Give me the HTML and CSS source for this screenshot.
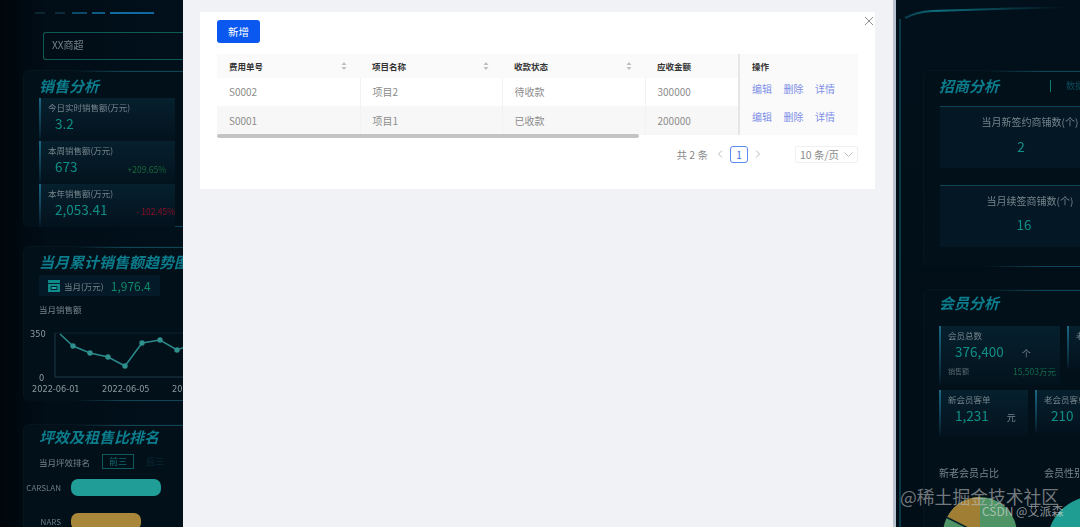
FILE: index.html
```html
<!DOCTYPE html>
<html>
    <head>
        <title>费用管理</title>
        <meta charset="UTF-8">
        <meta name="viewport" content="width=device-width, initial-scale=1.0">
        <link rel="stylesheet" href="styles.css">
    </head>
    <body>
        <div class="screen">
            <div class="left">
                <div class="dashes"><i class="d1"></i><i class="d2"></i><i class="d3"></i><i class="d4"></i><i class="d5"></i></div>
                <div class="mall">XX商超</div>
                <div class="panel sales">
                    <h2>销售分析</h2>
                    <div class="kpi">
                        <p class="lbl">今日实时销售额(万元)</p>
                        <p class="val">3.2</p>
                    </div>
                    <div class="kpi">
                        <p class="lbl">本周销售额(万元)</p>
                        <p class="val">673</p>
                        <span class="up">+209.65%</span>
                    </div>
                    <div class="kpi">
                        <p class="lbl">本年销售额(万元)</p>
                        <p class="val">2,053.41</p>
                        <span class="down">- 102.45%</span>
                    </div>
                </div>
                <div class="panel trend">
                    <h2 class="nowrap">当月累计销售额趋势图</h2>
                    <div class="month">
                        <svg width="12" height="12" viewBox="0 0 12 12"><path d="M0 0h12v12H0z" fill="#0f8a8a"/><path d="M0 3.5h12M3 6.5h6v3H3z" stroke="#05202c" fill="#1fa6a0"/></svg>
                        <span class="lbl">当月(万元)</span>
                        <span class="monthval">1,976.4</span>
                    </div>
                    <p class="lbl sub">当月销售额</p>
                    <svg class="chart" width="160" height="66" viewBox="0 0 160 66">
                        <path d="M25 2H160" stroke="#0a2230" fill="none"/>
                        <path d="M25 46H160M25 2V46" stroke="#1c3844" fill="none"/>
                        <polyline points="30,3 43,15 60,22 78,26 95,35 112,12 130,9 147,19 160,14" fill="none" stroke="#2b8a8a" stroke-width="1.5"/>
                        <g fill="#2f8f8c">
                            <circle cx="43" cy="15" r="2.7"/><circle cx="60" cy="22" r="2.7"/><circle cx="78" cy="26" r="2.7"/><circle cx="95" cy="35" r="2.7"/><circle cx="112" cy="12" r="2.7"/><circle cx="130" cy="9" r="2.7"/><circle cx="147" cy="19" r="2.7"/>
                        </g>
                        <g class="axis">
                            <text x="0" y="6">350</text>
                            <text x="9" y="50">0</text>
                            <text x="2" y="61">2022-06-01</text>
                            <text x="72" y="61">2022-06-05</text>
                            <text x="142" y="61">2022-06-09</text>
                        </g>
                    </svg>
                </div>
                <div class="panel rank">
                    <h2 class="nowrap">坪效及租售比排名</h2>
                    <div class="rankhead">
                        <span class="lbl">当月坪效排名</span>
                        <span class="top3">前三</span>
                        <span class="after3">后三</span>
                    </div>
                    <div class="barrow"><span class="barname">CARSLAN</span><i class="bar teal"></i></div>
                    <div class="barrow"><span class="barname">NARS</span><i class="bar gold"></i></div>
                </div>
            </div>

            <div class="drawer">
                <div class="card">
                    <svg class="close" width="10" height="10" viewBox="0 0 10 10"><path d="M1 1l8 8M9 1l-8 8" stroke="#8c8c8c" fill="none"/></svg>
                    <button class="add">新增</button>
                    <table class="tbl">
                        <thead>
                            <tr>
                                <th class="c1">费用单号<svg class="sort" width="6" height="10" viewBox="0 0 6 10"><path d="M3 1l2.5 3h-5zM3 9L.5 6h5z" fill="#bfbfbf"/></svg></th>
                                <th class="c2">项目名称<svg class="sort" width="6" height="10" viewBox="0 0 6 10"><path d="M3 1l2.5 3h-5zM3 9L.5 6h5z" fill="#bfbfbf"/></svg></th>
                                <th class="c3">收款状态<svg class="sort" width="6" height="10" viewBox="0 0 6 10"><path d="M3 1l2.5 3h-5zM3 9L.5 6h5z" fill="#bfbfbf"/></svg></th>
                                <th class="c4">应收金额</th>
                                <th class="c5 op">操作</th>
                            </tr>
                        </thead>
                        <tbody>
                            <tr class="r1">
                                <td>S0002</td>
                                <td>项目2</td>
                                <td>待收款</td>
                                <td>300000</td>
                                <td class="op links"><a>编辑</a><a>删除</a><a>详情</a></td>
                            </tr>
                            <tr class="r2">
                                <td>S0001</td>
                                <td>项目1</td>
                                <td>已收款</td>
                                <td>200000</td>
                                <td class="op links"><a>编辑</a><a>删除</a><a>详情</a></td>
                            </tr>
                        </tbody>
                    </table>
                    <div class="scroll"></div>
                    <div class="pager">
                        <span class="total">共 2 条</span>
                        <svg width="6" height="8" viewBox="0 0 6 8"><path d="M5 .5L1.5 4 5 7.5" stroke="#bbb" fill="none"/></svg>
                        <span class="page">1</span>
                        <svg width="6" height="8" viewBox="0 0 6 8"><path d="M1 .5L4.5 4 1 7.5" stroke="#bbb" fill="none"/></svg>
                        <span class="size">10 条/页<svg width="9" height="5" viewBox="0 0 9 5"><path d="M.5.5l4 4 4-4" stroke="#bbb" fill="none"/></svg></span>
                    </div>
                </div>
            </div>

            <div class="right">
                <svg class="glow" width="184" height="12" viewBox="0 0 184 12">
                    <defs>
                        <linearGradient id="glowline">
                            <stop offset="0" stop-color="#0a3a4a"/>
                            <stop offset=".2" stop-color="#0e7080"/>
                            <stop offset=".7" stop-color="#07303c"/>
                            <stop offset="1" stop-color="#01101a"/>
                        </linearGradient>
                    </defs>
                    <path d="M9 11Q20 5 36 4L170 0" stroke="url(#glowline)" stroke-width="2" fill="none"/>
                </svg>
                <div class="rightin">
                    <div class="panel shops">
                        <div class="shopshead"><h2>招商分析</h2><span class="tag">数据</span></div>
                        <div class="shop">
                            <p class="lbl">当月新签约商铺数(个)</p>
                            <p class="val">2</p>
                        </div>
                        <div class="shop">
                            <p class="lbl">当月续签商铺数(个)</p>
                            <p class="val">16</p>
                        </div>
                    </div>
                    <div class="panel members">
                        <h2>会员分析</h2>
                        <div class="mrow">
                            <div class="kpi mtotal">
                                <p class="lbl">会员总数</p>
                                <p class="val">376,400<span class="unit">个</span></p>
                                <p class="mfoot"><span>销售额</span><b>15,503万元</b></p>
                            </div>
                            <div class="kpi">
                                <p class="lbl">老会员数</p>
                            </div>
                        </div>
                        <div class="mrow">
                            <div class="kpi mnew">
                                <p class="lbl">新会员客单</p>
                                <p class="val">1,231<span class="unit">元</span></p>
                            </div>
                            <div class="kpi">
                                <p class="lbl">老会员客单</p>
                                <p class="val">210</p>
                            </div>
                        </div>
                        <div class="pies">
                            <div class="piebox">
                                <p class="lbl pietitle">新老会员占比</p>
                                <svg class="pie1" width="76" height="40" viewBox="0 0 76 40">
                                    <circle cx="37" cy="37" r="37" fill="#4f9465"/>
                                    <path d="M37 37V0A37 37 0 0 0 4 20.5z" fill="#a07f35"/>
                                    <path d="M37 37L4 20.5" stroke="#06202a" stroke-width="1.5"/>
                                </svg>
                            </div>
                            <div class="piebox">
                                <p class="lbl pietitle">会员性别</p>
                                <svg class="pie2" width="30" height="40" viewBox="0 0 30 40">
                                    <circle cx="45" cy="47" r="48" fill="#1f9d93"/>
                                </svg>
                            </div>
                        </div>
                    </div>
                </div>
            </div>
        </div>
        <div class="mark">
            <span class="mark1">@稀土掘金技术社区</span>
            <span class="mark2">CSDN @艾派森</span>
        </div>
    </body>
</html>
```

FILE: styles.css
```css
*{
    box-sizing: border-box;
    margin: 0;
    padding: 0;
}
body{
    width: 1080px;
    height: 527px;
    overflow: hidden;
    position: relative;
    background-color: #010a13;
    font-family: "Noto Sans CJK SC", "Noto Sans", sans-serif;
}
.screen{
    display: flex;
    height: 527px;
    overflow: hidden;
}
p{
    white-space: nowrap;
}

/* dark dashboard behind the drawer */
.left{
    width: 183px;
    flex: none;
    height: 527px;
    overflow: hidden;
    padding: 11px 0 0 23px;
    background: linear-gradient(90deg, #00060b 0, #010d17 25%, #01101b 100%);
    filter: blur(.4px);
}
.dashes{
    display: flex;
    height: 3px;
    margin-left: 12px;
    align-items: center;
}
.dashes i{
    display: block;
    height: 2px;
}
.d1{ width: 10px; background-color: #0a2530; }
.d2{ width: 10px; margin-left: 10px; background-color: #0c2c3c; }
.d3{ width: 15px; margin-left: 7px; background-color: #0c4a6c; }
.d4{ width: 13px; margin-left: 5px; background-color: #0e5a85; }
.d5{ width: 44px; margin-left: 5px; background-color: #0f6aa0; }
.mall{
    width: 160px;
    height: 28px;
    margin: 18px 0 10px 20px;
    padding-left: 8px;
    border: 1px solid #0d5a55;
    border-right: 0;
    border-radius: 3px 0 0 3px;
    color: #77838a;
    font-size: 10px;
    line-height: 23px;
}
.panel{
    border-left: 1px solid #05161f;
    border-top: 1px solid #05161f;
    border-radius: 6px 0 0 6px;
    background:
        linear-gradient(90deg, transparent 30%, #0e4658 60%) top / 100% 1px no-repeat,
        linear-gradient(90deg, transparent 30%, #0e4658 60%) bottom / 100% 1px no-repeat,
        #02101a;
}
.panel h2{
    color: #0b7d8c;
    font-size: 15px;
    font-style: italic;
    font-weight: 700;
    line-height: 18px;
}
.nowrap{
    white-space: nowrap;
}
.lbl{
    color: #76858b;
    font-size: 8.5px;
    line-height: 12px;
}
.val{
    color: #0f8f86;
    font-size: 13.5px;
    line-height: 20px;
    padding-left: 7px;
}
.kpi{
    position: relative;
    height: 43px;
    padding: 3px 0 0 7px;
    border-left: 2px solid;
    border-image: linear-gradient(180deg, #1a6a88, #0a2a3a 80%, transparent) 1;
    background: linear-gradient(180deg, #06202e, #03121d);
}
.sales{
    width: 170px;
    height: 157px;
    padding: 6px 0 0 15px;
}
.sales h2{
    margin-bottom: 3px;
}
.sales .kpi{
    width: 136px;
}
.up{
    position: absolute;
    right: 9px;
    bottom: 9px;
    color: #176a3c;
    font-size: 8.5px;
    line-height: 12px;
}
.down{
    position: absolute;
    right: 0;
    bottom: 10px;
    color: #8a0f26;
    font-size: 8.5px;
    line-height: 12px;
    white-space: nowrap;
}
.trend{
    width: 170px;
    height: 155px;
    margin-top: 19px;
    padding: 6px 0 0 15px;
    overflow: hidden;
}
.month{
    display: flex;
    align-items: center;
    gap: 4px;
    width: 121px;
    height: 21px;
    margin-top: 4px;
    padding-left: 9px;
    background-color: #041a28;
}
.monthval{
    margin-left: 3px;
    color: #0f8a68;
    font-size: 12px;
}
.sub{
    margin-top: 7px;
}
.chart{
    display: block;
    margin: 16px 0 0 -9px;
    overflow: visible;
}
.axis text{
    fill: #8d9ba0;
    font-family: "DejaVu Sans", sans-serif;
    font-size: 8.2px;
}
.rank{
    width: 170px;
    height: 120px;
    margin-top: 23px;
    padding: 3px 0 0 15px;
    overflow: hidden;
}
.rankhead{
    display: flex;
    align-items: center;
    gap: 12px;
    margin-top: 8px;
    white-space: nowrap;
}
.top3{
    width: 32px;
    height: 15px;
    border: 1px solid #0e5a5c;
    color: #0d6a70;
    font-size: 9px;
    line-height: 13px;
    text-align: center;
}
.after3{
    color: #0a2a36;
    font-size: 9px;
}
.barrow{
    display: flex;
    align-items: center;
    gap: 10px;
    height: 17px;
    margin: 10px 0 17px -15px;
}
.barname{
    width: 37px;
    flex: none;
    color: #6d7b80;
    font-size: 8px;
    text-align: right;
    white-space: nowrap;
}
.bar{
    display: block;
    height: 17px;
    border-radius: 7px;
}
.teal{
    width: 90px;
    background-color: #1f9d96;
}
.gold{
    width: 70px;
    background-color: #a8873a;
}

/* drawer */
.drawer{
    width: 713px;
    flex: none;
    height: 527px;
    padding: 12px 0 0 17px;
    background-color: #f0f2f5;
    border-right: 3px solid #b9c3cf;
}
.card{
    position: relative;
    width: 675px;
    height: 177px;
    padding: 8px 17px 0;
    background-color: #fff;
}
.close{
    position: absolute;
    top: 4px;
    right: 1px;
}
.add{
    display: block;
    width: 43px;
    height: 23px;
    border: 0;
    border-radius: 3px;
    background-color: #0a58f0;
    color: #fff;
    font-family: inherit;
    font-size: 10.5px;
}
.tbl{
    width: 641px;
    margin-top: 11px;
    border-collapse: collapse;
    table-layout: fixed;
    font-size: 10px;
}
.c1{ width: 143px; }
.c2{ width: 142px; }
.c3{ width: 143px; }
.c4{ width: 94px; }
.c5{ width: 119px; }
th{
    position: relative;
    height: 24px;
    padding-left: 12px;
    padding-bottom: 1px;
    background-color: #fafafa;
    color: #333;
    font-size: 8.5px;
    font-weight: 700;
    text-align: left;
}
td{
    padding-left: 12px;
    padding-bottom: 1px;
    color: #8c8c8c;
    border-right: 1px solid #f2f2f2;
}
.r1 td{
    height: 28px;
    background-color: #fff;
}
.r2 td{
    height: 29px;
    background-color: #f7f7f7;
}
.sort{
    position: absolute;
    top: 7px;
    right: 13px;
}
.op{
    border-left: 2px solid #e6e6e6;
}
.r1 .links, .r2 .links{
    padding-bottom: 8px;
    border-right: 0;
    background-color: #fafafa;
}
.links a{
    margin-right: 11.5px;
    color: #7f90e8;
}
.scroll{
    width: 422px;
    height: 4px;
    margin-top: -1px;
    border-radius: 2px;
    background-color: #c4c4c4;
    position: relative;
}
.pager{
    display: flex;
    align-items: center;
    justify-content: flex-end;
    height: 18px;
    margin-top: 7px;
    gap: 7px;
    color: #8a8a8a;
    font-size: 10.5px;
}
.total{
    margin-right: 2px;
}
.page{
    width: 18px;
    height: 17px;
    border: 1px solid #5b8def;
    border-radius: 3px;
    color: #3d74e0;
    font-size: 10px;
    line-height: 15px;
    text-align: center;
}
.size{
    display: flex;
    align-items: center;
    gap: 5px;
    width: 63px;
    height: 17px;
    margin-left: 27px;
    padding-left: 4px;
    border: 1px solid #f0f0f0;
    border-radius: 2px;
}

/* right side */
.right{
    flex: 1;
    height: 527px;
    overflow: hidden;
    padding-top: 7px;
    background: linear-gradient(180deg, #01101a, #010d17);
    filter: blur(.4px);
}
.glow{
    display: block;
}
.rightin{
    height: 508px;
    margin-left: 3px;
    padding: 51px 0 0 22px;
    border-left: 2px solid #0a3a48;
}
.shops{
    height: 197px;
    width: 200px;
    padding: 6px 0 0 15px;
}
.shopshead{
    display: flex;
    align-items: center;
    gap: 51px;
    white-space: nowrap;
}
.tag{
    color: #0d4a58;
    font-size: 9px;
    line-height: 12px;
    padding-left: 15px;
    border-left: 1px solid #0f7d70;
}
.shop{
    width: 180px;
    height: 62px;
    margin: 11px 0 0 1px;
    padding-top: 7px;
    border-top: 1px solid #0d4552;
    background-color: #031725;
    text-align: center;
}
.shop + .shop{
    margin-top: 17px;
}
.shop .lbl{
    font-size: 10px;
    line-height: 16px;
}
.shop .val{
    margin-top: 6px;
    padding: 0 18px 0 0;
    font-size: 13.5px;
}
.shop + .shop .val{
    margin-top: 5px;
    padding-right: 12px;
}
.members{
    width: 200px;
    height: 250px;
    margin-top: 22px;
    padding: 4px 0 0 15px;
}
.mrow{
    display: flex;
    gap: 7px;
    white-space: nowrap;
}
.members h2{
    margin-bottom: 14px;
}
.mtotal{
    width: 121px;
    height: 59px;
    flex: none;
}
.mnew{
    width: 89px;
    height: 46px;
    flex: none;
}
.mrow + .mrow{
    margin-top: 5px;
}
.mrow .kpi{
    min-width: 60px;
}
.unit{
    margin-left: 18px;
    color: #76858b;
    font-size: 9px;
}
.mfoot{
    display: flex;
    align-items: center;
    justify-content: space-between;
    padding-right: 4px;
    color: #5c6a70;
    font-size: 7px;
    line-height: 14px;
}
.mfoot b{
    color: #116a4a;
    font-size: 8.5px;
    font-weight: 400;
}
.pies{
    display: flex;
    margin-top: 30px;
}
.piebox{
    width: 105px;
    flex: none;
}
.pietitle{
    font-size: 10px;
    line-height: 14px;
    margin-bottom: 17px;
}
.pie1{
    display: block;
    margin-left: 4px;
}
.pie2{
    display: block;
    margin-left: 6px;
}
.mark{
    position: absolute;
    left: 900px;
    top: 485px;
    width: 180px;
    white-space: nowrap;
}
.mark span{
    position: absolute;
    display: block;
}
.mark1{
    left: 0;
    top: 0;
    color: rgba(190, 190, 190, .62);
    font-size: 17.8px;
    line-height: 22px;
}
.mark2{
    left: 82px;
    top: 18px;
    color: rgba(220, 220, 220, .65);
    font-size: 12px;
    line-height: 16px;
}
```
